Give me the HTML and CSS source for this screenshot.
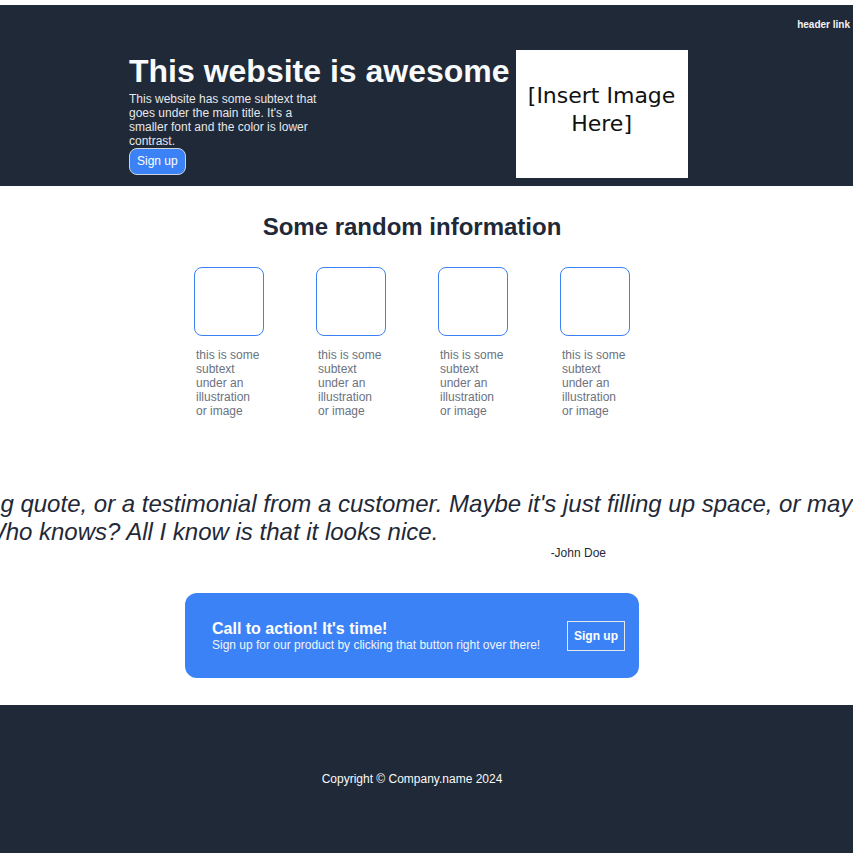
FILE: index.html
```html
<!DOCTYPE html>
<html lang="en">
<head>
<meta charset="utf-8">
<title>This website is awesome</title>
<link rel="stylesheet" href="styles.css">
</head>
<body>
<header class="site-header">
  <nav class="nav"><a class="nav-link" href="#">header link</a></nav>
  <div class="hero">
    <div class="hero-text">
      <h1 class="hero-title">This website is awesome</h1>
      <p class="hero-sub">This website has some subtext that goes under the main title. It's a smaller font and the color is lower contrast.</p>
      <a class="btn-hero" href="#">Sign up</a>
    </div>
    <div class="hero-image">[Insert Image Here]</div>
  </div>
</header>
<main>
  <section class="info">
    <h2 class="info-title">Some random information</h2>
    <div class="cards">
      <div class="card"><div class="card-img"></div><p class="card-text">this is some subtext under an illustration or image</p></div>
      <div class="card"><div class="card-img"></div><p class="card-text">this is some subtext under an illustration or image</p></div>
      <div class="card"><div class="card-img"></div><p class="card-text">this is some subtext under an illustration or image</p></div>
      <div class="card"><div class="card-img"></div><p class="card-text">this is some subtext under an illustration or image</p></div>
    </div>
  </section>
  <section class="quote">
    <div class="quote-box">
      <blockquote class="quote-text">This is an inspiring quote, or a testimonial from a customer. Maybe it's just filling up space, or maybe people will actually read it.<br>Who knows? All I know is that it looks nice.</blockquote>
      <p class="author">-John Doe</p>
    </div>
  </section>
  <section class="cta-wrap">
    <div class="cta">
      <div class="cta-copy">
        <p class="cta-title">Call to action! It's time!</p>
        <p class="cta-sub">Sign up for our product by clicking that button right over there!</p>
      </div>
      <a class="cta-btn" href="#">Sign up</a>
    </div>
  </section>
</main>
<footer class="site-footer">Copyright © Company.name 2024</footer>
</body>
</html>
```
FILE: styles.css
```css
html, body {
  margin: 0;
}
body {
  padding-top: 5px;
  font-family: "Liberation Sans", Arial, sans-serif;
  background: #ffffff;
  color: #1f2937;
}
a {
  text-decoration: none;
}

/* header */
.site-header {
  background: #1f2937;
  padding: 0 3px 8px 0;
}
.nav {
  box-sizing: border-box;
  height: 45px;
  padding-top: 14px;
  display: flex;
  justify-content: flex-end;
  align-items: flex-start;
}
.nav-link {
  color: #f3f4f6;
  font-size: 10px;
  font-weight: bold;
  line-height: 12px;
}
.hero {
  display: flex;
  align-items: center;
  gap: 6px;
  padding-left: 129px;
}
.hero-text {
  display: flex;
  flex-direction: column;
  align-items: flex-start;
}
.hero-title {
  margin: 0;
  font-size: 32px;
  line-height: 37px;
  font-weight: bold;
  white-space: nowrap;
  color: #f9fafb;
}
.hero-sub {
  margin: 2px 0 0;
  width: 200px;
  font-size: 12px;
  line-height: 14px;
  color: #e5e7eb;
}
.btn-hero {
  display: inline-block;
  background: #3b82f6;
  color: #ffffff;
  font-size: 12px;
  line-height: 15px;
  padding: 5px 7px;
  border: 1px solid #d1d5db;
  border-radius: 8px;
}
.hero-image {
  box-sizing: border-box;
  width: 172px;
  height: 128px;
  padding-bottom: 8px;
  background: #ffffff;
  display: flex;
  align-items: center;
  justify-content: center;
  text-align: center;
  font-family: "DejaVu Sans", sans-serif;
  font-size: 22px;
  line-height: 28px;
  color: #111111;
}

/* info */
.info {
  width: 824px;
  padding-top: 27px;
}
.info-title {
  margin: 0;
  text-align: center;
  font-size: 24px;
  line-height: 27px;
  font-weight: bold;
  color: #1f2937;
}
.cards {
  display: flex;
  justify-content: center;
  gap: 52px;
  margin-top: 27px;
}
.card {
  width: 70px;
}
.card-img {
  width: 68px;
  height: 67px;
  border: 1px solid #3b82f6;
  border-radius: 8px;
}
.card-text {
  margin: 12px 0 0;
  padding-left: 2px;
  width: 66px;
  font-size: 12px;
  line-height: 14px;
  color: #6b7280;
}

/* quote */
.quote {
  overflow: hidden;
  margin-top: 72px;
}
.quote-box {
  width: 388px;
  margin-left: 218px;
}
.quote-text {
  margin: 0 0 0 -235px;
  white-space: nowrap;
  text-indent: -168px;
  font-style: italic;
  font-size: 24px;
  line-height: 28px;
  color: #1f2937;
}
.author {
  margin: 0;
  text-align: right;
  font-size: 12px;
  line-height: 14px;
  color: #1f2937;
}

/* call to action */
.cta-wrap {
  width: 824px;
  display: flex;
  justify-content: center;
  margin-top: 33px;
}
.cta {
  box-sizing: border-box;
  width: 454px;
  height: 85px;
  padding: 0 14px 0 27px;
  background: #3b82f6;
  border-radius: 12px;
  display: flex;
  align-items: center;
  justify-content: space-between;
  color: #ffffff;
}
.cta-title {
  margin: 0;
  font-size: 16px;
  line-height: 18px;
  font-weight: bold;
}
.cta-sub {
  margin: 0;
  font-size: 12px;
  line-height: 14px;
  color: #f3f4f6;
}
.cta-btn {
  border: 1px solid #e5e7eb;
  padding: 7px 6px;
  font-size: 12px;
  line-height: 14px;
  font-weight: bold;
  color: #ffffff;
}

/* footer */
.site-footer {
  margin-top: 27px;
  background: #1f2937;
  color: #f9fafb;
  font-size: 12px;
  line-height: 14px;
  text-align: center;
  padding: 67px 29px 70px 0;
}
```
